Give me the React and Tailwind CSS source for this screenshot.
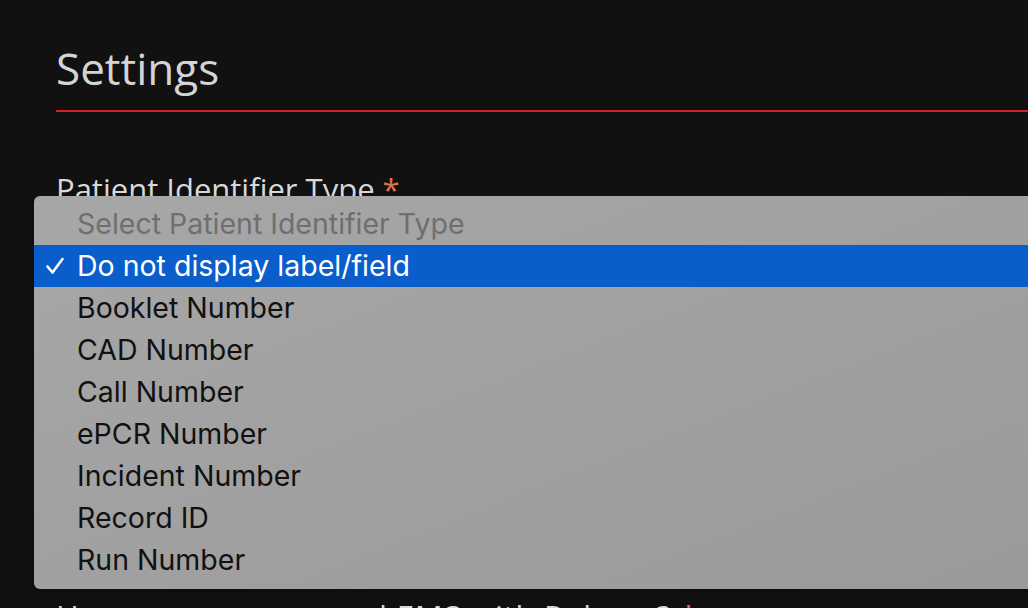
import React from 'react';

const options = [
    'Booklet Number',
    'CAD Number',
    'Call Number',
    'ePCR Number',
    'Incident Number',
    'Record ID',
    'Run Number',
];

const App = () => {
    return (
        <div className="relative h-[608px] w-[1028px] overflow-hidden bg-[#111111] font-['Open_Sans',sans-serif]">
            <div className="pl-[56px] pt-[40px]">
                <h1 className="text-[44px] leading-[56px] text-[#d4d4d4] pb-[14px] border-b-2 border-[#d61f26]">Settings</h1>

                <div className="mt-[58px]">
                    <label className="text-[31px] leading-[38px] text-[#d8d8d8]">
                        Patient Identifier Type <span className="text-[#e0734f]">*</span>
                    </label>
                </div>

                <div className="mt-[389px]">
                    <label className="text-[31px] leading-[38px] tracking-[0.8px] text-[#d8d8d8]">
                        Has your agency used EMS with Pulsara? <span className="text-[#e0734f]">*</span>
                    </label>
                </div>
            </div>

            {/* open select menu */}
            <div className="absolute left-[34px] top-[196px] w-[1020px] rounded-md bg-gradient-to-br from-[#a7a7a7] to-[#9a9a9a] pt-[7px] pb-[8px] font-['Inter',sans-serif] text-[28.5px] shadow-lg">
                <div className="h-[42px] flex items-center pl-[43px] text-[#6f6f6f]">Select Patient Identifier Type</div>
                <div className="h-[42px] flex items-center bg-[#0a5ecb] text-white">
                    <span className="w-[43px] pl-[11px] flex items-center">
                        <svg width="20" height="20" viewBox="0 0 20 20" fill="none" stroke="currentColor" strokeWidth="2.6" strokeLinecap="round" strokeLinejoin="round">
                            <path d="M2.5 10.5 L7.5 16.5 L17.5 3" />
                        </svg>
                    </span>
                    Do not display label/field
                </div>
                {options.map((opt) => (
                    <div key={opt} className="h-[42px] flex items-center pl-[43px] text-[#111111]">{opt}</div>
                ))}
            </div>
        </div>
    );
};

export default App;
